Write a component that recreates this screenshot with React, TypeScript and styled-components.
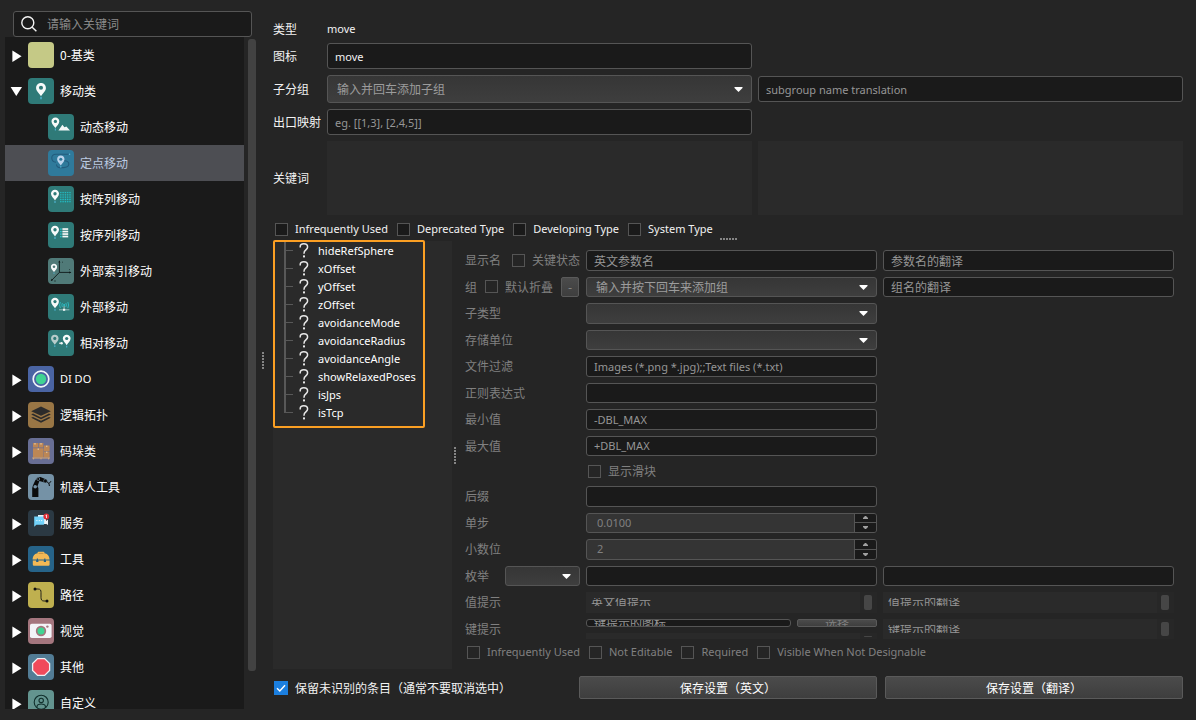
import React from "react";
import styled, { createGlobalStyle, css } from "styled-components";

const color = {
  page: "#252525",
  panel: "#2a2a2a",
  field: "#1a1a1a",
  border: "#555555",
  text: "#f2f2f2",
  muted: "#808080",
  hint: "#969696",
  thumb: "#424242",
};

const GlobalStyle = createGlobalStyle`
  *, *::before, *::after { box-sizing: border-box; }
  body {
    margin: 0;
    background: ${color.page};
    color: ${color.text};
    font-family: "Noto Sans CJK SC", "Noto Sans", sans-serif;
    font-size: 12px;
    line-height: 16px;
  }
  input, select, button, textarea { font: inherit; color: inherit; margin: 0; }
  ul { list-style: none; margin: 0; padding: 0; }
`;

/* Latin text is set a little smaller than the Chinese text beside it. */
const latinFont = css`
  font-family: "Noto Sans", "Noto Sans CJK SC", sans-serif;
  font-size: 11px;
`;

const Latin = styled.span`
  ${latinFont}
`;

const Shell = styled.div`
  display: flex;
  height: 100vh;
  overflow: hidden;
`;

/* ---------- Sidebar ---------- */

const Sidebar = styled.aside`
  display: flex;
  flex-direction: column;
  flex: none;
  width: 256px;
  padding: 11px 0 11px 5px;
`;

const SearchBox = styled.label`
  display: flex;
  align-items: center;
  gap: 10px;
  height: 26px;
  flex: none;
  margin: 0 4px 0 8px;
  padding: 0 7px;
  border: 1px solid ${color.border};
  border-radius: 3px;
  background: ${color.field};
`;

const SearchInput = styled.input`
  flex: 1;
  min-width: 0;
  padding: 0;
  border: 0;
  outline: 0;
  background: transparent;
  &::placeholder { color: #8a8a8a; }
`;

const TreeArea = styled.div`
  display: flex;
  flex: 1;
  min-height: 0;
`;

const CategoryList = styled.ul`
  flex: 1;
  overflow: hidden;
  background: ${color.field};
`;

const CategoryRow = styled.button<{ $child?: boolean; $selected?: boolean }>`
  display: flex;
  align-items: center;
  gap: 6px;
  width: 100%;
  height: 36px;
  padding: 0 0 0 ${(p) => (p.$child ? 43 : 5)}px;
  border: 0;
  text-align: left;
  background: ${(p) => (p.$selected ? "#4d4e53" : "transparent")};
  color: ${(p) => (p.$selected ? "#bccbe2" : "#ffffff")};
`;

const Tile = styled.svg`
  flex: none;
  width: 26px;
  height: 26px;
  border-radius: 4px;
`;

const Expander = styled.svg`
  flex: none;
  width: 12px;
  height: 14px;
`;

const ScrollTrack = styled.div`
  width: 12px;
  padding: 2px 0 38px 4px;
`;

const ScrollThumb = styled.div`
  height: 100%;
  border-radius: 3px;
  background: ${color.thumb};
`;

const Handle = styled.div<{ $size: number; $horizontal?: boolean }>`
  display: flex;
  flex: none;
  flex-direction: ${(p) => (p.$horizontal ? "row" : "column")};
  align-items: center;
  justify-content: center;
  gap: 1px;
  ${(p) =>
    p.$horizontal
      ? css`height: ${p.$size}px;`
      : css`width: ${p.$size}px;`}
`;

const Dot = styled.i`
  width: 2px;
  height: 2px;
  background: #858585;
`;

/* ---------- Main column ---------- */

const Main = styled.main`
  display: flex;
  flex: 1;
  flex-direction: column;
  min-width: 0;
  padding: 21px 13px 20px 3px;
`;

const TypeForm = styled.div`
  display: grid;
  grid-template-columns: 48px minmax(0, 1fr) minmax(0, 1fr);
  gap: 6px;
  align-items: center;
`;

const FormLabel = styled.label`
  grid-column: 1;
  white-space: nowrap;
`;

const fieldBox = css`
  width: 100%;
  min-width: 0;
  border: 1px solid ${color.border};
  border-radius: 3px;
  outline: 0;
`;

const TextField = styled.input<{ $tall?: boolean; $latin?: boolean }>`
  ${fieldBox}
  height: ${(p) => (p.$tall ? "26px" : "100%")};
  padding: 0 7px;
  background: ${color.field};
  ${(p) => p.$latin && latinFont}
  &::placeholder { color: ${color.hint}; opacity: 1; }
`;

const KeywordArea = styled.textarea`
  display: block;
  width: 100%;
  height: 74px;
  padding: 5px;
  border: 0;
  outline: 0;
  resize: none;
  background: ${color.panel};
`;

const ComboWrap = styled.span<{ $tall?: boolean }>`
  position: relative;
  display: block;
  min-width: 0;
  height: ${(p) => (p.$tall ? "28px" : "100%")};
`;

const ComboSelect = styled.select`
  ${fieldBox}
  display: block;
  height: 100%;
  padding: 0 28px 0 9px;
  appearance: none;
  background: linear-gradient(#363636, #3e3e3e);
  color: #9c9c9c;
  opacity: 1;
`;

const ComboArrow = styled.svg`
  position: absolute;
  top: calc(50% - 2px);
  right: 9px;
  width: 9px;
  height: 5px;
  pointer-events: none;
`;

const CheckRow = styled.div`
  display: flex;
  align-items: center;
  gap: 9px;
  height: 16px;
  flex: none;
  padding-left: 2px;
`;

const WideCheckRow = styled(CheckRow)`
  grid-column: 1 / -1;
`;

const CheckLabel = styled.label<{ $latin?: boolean }>`
  display: flex;
  align-items: center;
  gap: 7px;
  white-space: nowrap;
  ${(p) => p.$latin && latinFont}
`;

const CheckBox = styled.input<{ $dim?: boolean }>`
  appearance: none;
  flex: none;
  width: 13px;
  height: 13px;
  border: 1px solid ${color.border};
  background: ${(p) => (p.$dim ? color.page : color.field)};
`;

const KeepBox = styled.input`
  appearance: none;
  display: block;
  width: 14px;
  height: 14px;
  background: #1b7fe0;
`;

const KeepMark = styled.span`
  position: relative;
  flex: none;
  svg {
    position: absolute;
    inset: 0;
    pointer-events: none;
  }
`;

const Workspace = styled.div`
  display: flex;
  flex: 1;
  min-height: 0;
`;

const ParamPanel = styled.div`
  display: flex;
  flex: none;
  flex-direction: column;
  align-items: flex-start;
  width: 179px;
  background: ${color.panel};
`;

const ParamTree = styled.ul`
  margin-top: -1px;
  padding: 0 7px 4px 9px;
  border: 2px solid #fb9f23;
  border-radius: 2px;
`;

const ParamRow = styled.li`
  display: flex;
  align-items: center;
  height: 18px;
  white-space: nowrap;
  color: #ffffff;
  ${latinFont}
`;

const Branch = styled.svg`
  flex: none;
  width: 10px;
  height: 18px;
  margin-right: 5px;
`;

const Question = styled.svg`
  flex: none;
  width: 10px;
  height: 16px;
  margin-right: 9px;
`;

const ParamForm = styled.fieldset`
  display: flex;
  flex: 1;
  flex-direction: column;
  gap: 5px;
  min-width: 0;
  margin: 0;
  padding: 9px 9px 9px 7px;
  border: 0;
  color: ${color.muted};
`;

const PropGrid = styled.div`
  display: grid;
  flex: 1;
  grid-template-columns: 115px minmax(0, 1fr) minmax(0, 1fr);
  grid-template-rows: repeat(8, minmax(0, 1fr)) 18px repeat(6, minmax(0, 1fr));
  gap: 6px;
  min-height: 0;
`;

const PropLabel = styled.div<{ $spread?: boolean }>`
  display: flex;
  grid-column: 1;
  align-items: center;
  justify-content: ${(p) => (p.$spread ? "space-between" : "flex-start")};
  gap: 8px;
  min-height: 0;
  white-space: nowrap;
`;

const SliderCell = styled.div`
  display: flex;
  grid-column: 2;
  align-items: center;
  padding-left: 2px;
`;

const faceStyle = css`
  border: 1px solid #5a5a5a;
  border-radius: 2px;
  background: linear-gradient(#4b4b4b, #3e3e3e);
`;

const MinusButton = styled.button`
  ${faceStyle}
  width: 18px;
  height: 100%;
  padding: 0;
  color: #8a8a8a;
`;

const EnumCombo = styled.div`
  width: 75px;
  height: 100%;
`;

const Spin = styled.div`
  ${fieldBox}
  display: flex;
  min-height: 0;
  overflow: hidden;
  background: #343434;
`;

const SpinInput = styled.input`
  flex: 1;
  min-width: 0;
  padding: 0 10px;
  border: 0;
  outline: 0;
  background: transparent;
  ${latinFont}
`;

const SpinButtons = styled.div`
  display: flex;
  flex-direction: column;
  width: 22px;
  border-left: 1px solid ${color.border};
`;

const SpinButton = styled.button`
  display: flex;
  flex: 1;
  align-items: center;
  justify-content: center;
  min-height: 0;
  padding: 0;
  border: 0;
  background: ${color.field};
  & + & { border-top: 1px solid ${color.border}; }
`;

const Memo = styled.div`
  display: flex;
  align-items: center;
  justify-content: space-between;
  min-height: 0;
  height: 100%;
  padding: 0 0 0 5px;
  overflow: hidden;
  background: ${color.panel};
`;

const MemoText = styled.textarea`
  flex: 1;
  min-width: 0;
  height: 8px;
  padding: 0;
  border: 0;
  outline: 0;
  resize: none;
  overflow: hidden;
  line-height: 8px;
  background: transparent;
  &::placeholder { color: ${color.hint}; }
`;

const MemoTrack = styled.div`
  display: flex;
  align-self: stretch;
  justify-content: center;
  width: 17px;
  padding: 3px 1px 3px 0;
  background: #272727;
`;

const MemoThumb = styled.div`
  width: 8px;
  border-radius: 2px;
  background: #464646;
`;

const KeyHint = styled.div`
  display: flex;
  flex-direction: column;
  gap: 6px;
  min-height: 0;
`;

const KeyHintRow = styled.div`
  display: flex;
  gap: 6px;
  height: 8px;
  flex: none;
`;

const TinyField = styled(TextField)`
  flex: 1;
  width: auto;
  line-height: 6px;
`;

const TinyButton = styled.button`
  ${faceStyle}
  width: 80px;
  padding: 0;
  overflow: hidden;
  line-height: 6px;
`;

const BottomBar = styled.div`
  display: grid;
  grid-template-columns: repeat(3, minmax(0, 1fr));
  gap: 8px;
  align-items: center;
  height: 25px;
  margin-top: 6px;
  flex: none;
`;

const KeepLabel = styled(CheckLabel)`
  padding-left: 1px;
`;

const SaveButton = styled.button`
  ${faceStyle}
  height: 23px;
  padding: 0;
  color: #ffffff;
`;

/* ---------- Drawings ---------- */

type PinProps = { x: number; y: number; s?: number; fill?: string; hole?: string };

const Pin = ({ x, y, s = 1, fill = "#f7fafa", hole = "#2f7a78" }: PinProps) => (
  <g transform={`translate(${x} ${y}) scale(${s})`}>
    <path d="M0 0C-2.5 0-4.1 1.8-4.1 4.1C-4.1 6.8-1.3 8.6 0 11C1.3 8.6 4.1 6.8 4.1 4.1C4.1 1.8 2.5 0 0 0Z" fill={fill} />
    <circle cx="0" cy="4" r="1.7" fill={hole} />
    <path d="M0 11.5V13.5" stroke="#4fb3d0" strokeWidth="1.2" />
  </g>
);

const range = (n: number) => Array.from({ length: n }, (_, i) => i);

const tiles: Record<string, { bg: string; art: React.ReactNode }> = {
  base: { bg: "#c5c986", art: null },
  move: { bg: "#2f7a78", art: <Pin x={13} y={5} s={1.2} /> },
  dynamic: {
    bg: "#2f7a78",
    art: (
      <>
        <Pin x={7.4} y={3.6} s={0.95} />
        <path d="M10.4 16.4L14.4 10.8L16.4 13.2L18.4 12.4L22 16.4Z" fill="#f4f7f7" />
      </>
    ),
  },
  fixed: {
    bg: "#2f7a9b",
    art: (
      <>
        <path d="M21.5 4.3H8C5 4.3 3.6 6 3.8 8.2C4 10.8 5.5 12 8 12.2M16 10.8C19 10.6 21 12 20.8 14.3C20.6 16.6 18.6 17.6 15.5 17.6H12C9.6 17.6 8.4 16 8.6 14.4" fill="none" stroke="#235c7d" strokeWidth="1.1" />
        <circle cx="21.5" cy="4.3" r="0.8" fill="#5cb9dc" />
        <Pin x={12.8} y={5.6} s={0.9} fill="#bdd4ec" hole="#2f7a9b" />
      </>
    ),
  },
  array: {
    bg: "#2f7a78",
    art: (
      <>
        <Pin x={7} y={3.8} s={0.98} />
        <path d={range(5).map((i) => `M12 ${6.5 + i * 2.3}H23M${12.8 + i * 2.3} 5.8V16.5`).join("")} stroke="#22a9b2" strokeWidth="0.3" />
        {range(25).map((i) => (
          <circle key={i} cx={12.8 + (i % 5) * 2.3} cy={6.5 + Math.floor(i / 5) * 2.3} r="0.6" fill="#25c3cc" />
        ))}
      </>
    ),
  },
  sequence: {
    bg: "#2f7a78",
    art: (
      <>
        <Pin x={7} y={3.8} s={0.98} />
        {range(4).map((i) => (
          <g key={i}>
            <rect x="12.2" y={6.4 + i * 2.5} width="1.4" height="1.4" fill="#2cd0d8" />
            <rect x="14.4" y={6.2 + i * 2.5} width="5.8" height="1.7" fill="#f4f7f7" />
          </g>
        ))}
      </>
    ),
  },
  axes: {
    bg: "#507a78",
    art: (
      <>
        <path d="M11.4 3V14.4H22.8M11.4 14.4L3.4 22.6" fill="none" stroke="#0f1818" strokeWidth="0.9" />
        <path d="M11.4 2.2L12.4 4.4H10.4ZM23.4 14.4L21.2 13.4V15.4ZM2.8 23L3.6 20.8L5 22.2Z" fill="#0f1818" />
        <path d="M14 4.2H15M21 11.6H22M6 23H8" stroke="#253c3b" strokeWidth="0.9" />
        <Pin x={6} y={5.8} s={0.75} hole="#507a78" />
      </>
    ),
  },
  external: {
    bg: "#2f7a78",
    art: (
      <>
        <Pin x={7} y={3.8} s={0.95} />
        <g fill="none" stroke="#2cc4cc" strokeWidth="0.8">
          <path d="M12.4 8Q10.8 11 12.4 14M14.4 9Q13.2 11 14.4 13M19.8 8Q21.4 11 19.8 14M17.8 9Q19 11 17.8 13" />
        </g>
        <circle cx="16.1" cy="11" r="1" fill="#2cc4cc" />
        <path d="M11 15.8H21.4M16.1 12V16" stroke="#a9c6c5" strokeWidth="0.9" />
        <rect x="15" y="14.8" width="2.2" height="2" fill="#eef5f5" />
      </>
    ),
  },
  relative: {
    bg: "#2f7a78",
    art: (
      <>
        <Pin x={6.8} y={4.7} s={0.92} fill="#b7cccb" />
        <path d="M11 13.2H14" stroke="#f4f7f7" strokeWidth="1" />
        <circle cx="13.6" cy="13.2" r="1.2" fill="#f4f7f7" />
        <Pin x={18.7} y={4.7} s={0.95} />
      </>
    ),
  },
  dido: {
    bg: "#4a64a3",
    art: (
      <>
        <circle cx="13" cy="13" r="7.8" fill="none" stroke="#f3f5fa" strokeWidth="1.7" />
        <circle cx="13" cy="13" r="5.2" fill="#40d493" />
      </>
    ),
  },
  logic: {
    bg: "#997645",
    art: (
      <g fill="#2b2b2b">
        <path d="M13 4.6L22.8 9.2L13 13.8L3.2 9.2Z" />
        <path d="M3.2 12.4L5 11.6L13 15.4L21 11.6L22.8 12.4L13 17.2Z" />
        <path d="M3.2 15.8L5 15L13 18.8L21 15L22.8 15.8L13 20.8Z" />
      </g>
    ),
  },
  pallet: {
    bg: "#686e94",
    art: (
      <>
        <path d="M5 5H10V9.6H5ZM10.6 5H15.4V9.6H10.6ZM5 10.2H15.6V19.4H5ZM16 7.6H21.6V12.9H16ZM16 13.5H21.6V19.4H16Z" fill="#bd8755" />
        <path d="M7 5V6.6M13 5V6.6M18.8 7.6V9M18.8 13.6V15M10.2 10.4V12" stroke="#ecd3b0" strokeWidth="1" />
        <path d="M4.2 20H22M5.6 19.8V21.4M13 19.8V21.4M20.6 19.8V21.4" stroke="#d7a877" strokeWidth="1" />
      </>
    ),
  },
  robot: {
    bg: "#7592a6",
    art: (
      <>
        <path d="M4.2 23V14L5 11.2L7.2 6.4L9.4 3.4L12.4 3L17.8 5.2L16.8 8.4L11.4 7L9.4 12.4L10.4 14V23Z" fill="#0b0b0b" />
        <circle cx="10.2" cy="5" r="1.5" fill="#0b0b0b" stroke="#7592a6" strokeWidth="0.7" />
        <circle cx="7.2" cy="12.8" r="1.8" fill="#7592a6" />
        <circle cx="17.4" cy="7" r="1.9" fill="#0b0b0b" stroke="#7592a6" strokeWidth="0.5" />
        <path d="M18.6 7.4L21 9.6L23 7.2M21 9.6L21.4 12" fill="none" stroke="#0b0b0b" strokeWidth="1" />
      </>
    ),
  },
  service: {
    bg: "#2b3943",
    art: (
      <>
        <path d="M10 5H18V14H10ZM18 11L20 9.6V15L18 13.8Z" fill="#eef3f6" />
        <path d="M6.2 6.6H15.4Q16.2 6.6 16.2 7.4V14Q16.2 14.8 15.4 14.8H8.4L6.2 16.8Z" fill="#72d3fb" />
        <path d="M8.4 10.6H9.4M10.8 10.6H11.8M13.2 10.6H14.2" stroke="#ffffff" strokeWidth="1" />
        <circle cx="18.3" cy="6.5" r="2.9" fill="#dc3038" />
        <path d="M17.6 5.6L18.5 5V8" fill="none" stroke="#ffffff" strokeWidth="0.8" />
      </>
    ),
  },
  tools: {
    bg: "#266388",
    art: (
      <>
        <path d="M4.6 13.4C5 9.4 7 7.6 9.6 7.2V6.6Q9.6 5.8 10.6 5.8H15.4Q16.4 5.8 16.4 6.6V7.2C19 7.6 21.2 9.4 21.6 13.4Z" fill="#f2b955" />
        <path d="M10.6 7.4H15.4" stroke="#b88c46" strokeWidth="0.9" />
        <path d="M4.8 14.6H8.2V16H10.4V14.6H15.8V16H18V14.6H21.6V18.6Q21.6 19.8 20.4 19.8H6Q4.8 19.8 4.8 18.6Z" fill="#f2b955" />
        <path d="M8.8 12.4H10V15.6H8.8ZM16.2 12.4H17.4V15.6H16.2Z" fill="#266388" />
      </>
    ),
  },
  path: {
    bg: "#bfb04f",
    art: (
      <>
        <path d="M7 7H10C12.6 7 13 8.4 13 10.4V15.4C13 17.8 13.8 19 16 19H19" fill="none" stroke="#151515" strokeWidth="0.9" />
        <circle cx="7" cy="7" r="1.5" fill="#111111" />
        <circle cx="19" cy="19" r="1.5" fill="#111111" />
      </>
    ),
  },
  vision: {
    bg: "#a4767e",
    art: (
      <>
        <rect x="2" y="5.8" width="21.6" height="14.2" rx="1.8" fill="#f3f4f8" />
        <circle cx="13" cy="13" r="5.2" fill="#a4767e" />
        <circle cx="13" cy="13" r="3.5" fill="#40d493" />
        <circle cx="19.4" cy="8.6" r="1.2" fill="#a4767e" />
      </>
    ),
  },
  other: {
    bg: "#527c95",
    art: <path d="M9.6 4.6H16.6L21.6 9.6V16.4L16.6 21.4H9.6L4.6 16.4V9.6Z" fill="#f04a5b" stroke="#eef1f5" strokeWidth="1.3" />,
  },
  custom: {
    bg: "#63948f",
    art: (
      <g fill="none" stroke="#11302d" strokeWidth="1.1">
        <circle cx="13.2" cy="12.2" r="7" />
        <circle cx="13.2" cy="10.4" r="2.2" />
        <path d="M9 17.4V16.4Q9.4 14 13.2 14Q17 14 17.4 16.4V17.4" />
      </g>
    ),
  },
};

const TileIcon = ({ name }: { name: string }) => (
  <Tile viewBox="0 0 26 26" aria-hidden="true">
    <rect width="26" height="26" fill={tiles[name].bg} />
    {tiles[name].art}
  </Tile>
);

const SearchIcon = () => (
  <svg width="16" height="16" viewBox="0 0 16 16" fill="none" stroke="#f4f4f4" strokeWidth="1.4" aria-hidden="true">
    <circle cx="6.8" cy="6.8" r="6" />
    <path d="M11.2 11.2L15.4 15.2" />
  </svg>
);

/* ---------- Composite parts ---------- */

const Dots = ({ size, horizontal }: { size: number; horizontal?: boolean }) => (
  <Handle $size={size} $horizontal={horizontal}>
    {range(6).map((i) => <Dot key={i} />)}
  </Handle>
);

type ComboProps = { id?: string; label: string; text?: string; tall?: boolean };

const Combo = ({ id, label, text = "", tall }: ComboProps) => (
  <ComboWrap $tall={tall}>
    <ComboSelect id={id} aria-label={label}>
      <option>{text}</option>
    </ComboSelect>
    <ComboArrow viewBox="0 0 9 5" aria-hidden="true">
      <path d="M0.5 0H8.5V1L4.5 5L0.5 1Z" fill="#ffffff" />
    </ComboArrow>
  </ComboWrap>
);

const Check = ({ text, dim, latin }: { text: string; dim?: boolean; latin?: boolean }) => (
  <CheckLabel $latin={latin}>
    <CheckBox type="checkbox" $dim={dim} />
    {text}
  </CheckLabel>
);

const SpinBox = ({ id, value }: { id: string; value: string }) => (
  <Spin>
    <SpinInput id={id} defaultValue={value} inputMode="decimal" />
    <SpinButtons>
      <SpinButton type="button" aria-label="增加">
        <svg width="5" height="3" viewBox="0 0 5 3"><path d="M0 3V2L2 0H3L5 2V3Z" fill="#a0a0a0" /></svg>
      </SpinButton>
      <SpinButton type="button" aria-label="减少">
        <svg width="5" height="3" viewBox="0 0 5 3"><path d="M0 0V1L2 3H3L5 1V0Z" fill="#a0a0a0" /></svg>
      </SpinButton>
    </SpinButtons>
  </Spin>
);

const MemoBox = ({ id, label, text }: { id?: string; label: string; text?: string }) => (
  <Memo>
    <MemoText id={id} aria-label={label} placeholder={text} rows={1} />
    <MemoTrack><MemoThumb /></MemoTrack>
  </Memo>
);

/* ---------- Data ---------- */

type Category = {
  icon: string;
  name: string;
  latin?: boolean;
  open?: boolean;
  children?: { icon: string; name: string; selected?: boolean }[];
};

const categories: Category[] = [
  { icon: "base", name: "0-基类" },
  {
    icon: "move",
    name: "移动类",
    open: true,
    children: [
      { icon: "dynamic", name: "动态移动" },
      { icon: "fixed", name: "定点移动", selected: true },
      { icon: "array", name: "按阵列移动" },
      { icon: "sequence", name: "按序列移动" },
      { icon: "axes", name: "外部索引移动" },
      { icon: "external", name: "外部移动" },
      { icon: "relative", name: "相对移动" },
    ],
  },
  { icon: "dido", name: "DI DO", latin: true },
  { icon: "logic", name: "逻辑拓扑" },
  { icon: "pallet", name: "码垛类" },
  { icon: "robot", name: "机器人工具" },
  { icon: "service", name: "服务" },
  { icon: "tools", name: "工具" },
  { icon: "path", name: "路径" },
  { icon: "vision", name: "视觉" },
  { icon: "other", name: "其他" },
  { icon: "custom", name: "自定义" },
];

const params = [
  "hideRefSphere", "xOffset", "yOffset", "zOffset", "avoidanceMode",
  "avoidanceRadius", "avoidanceAngle", "showRelaxedPoses", "isJps", "isTcp",
];

export default function App() {
  return (
    <Shell>
      <GlobalStyle />
      <Sidebar>
        <SearchBox>
          <SearchIcon />
          <SearchInput placeholder="请输入关键词" aria-label="请输入关键词" />
        </SearchBox>
        <TreeArea>
          <CategoryList>
            {categories.map((c) => (
              <li key={c.name}>
                <CategoryRow type="button" aria-expanded={!!c.open}>
                  <Expander viewBox="0 0 12 14" aria-hidden="true">
                    <path d={c.open ? "M0.6 3H12L6.3 12Z" : "M2.4 2.4V14L11.6 8.2Z"} fill="#ffffff" />
                  </Expander>
                  <TileIcon name={c.icon} />
                  {c.latin ? <Latin>{c.name}</Latin> : c.name}
                </CategoryRow>
                {c.children && (
                  <ul>
                    {c.children.map((k) => (
                      <li key={k.name}>
                        <CategoryRow type="button" $child $selected={k.selected}>
                          <TileIcon name={k.icon} />
                          {k.name}
                        </CategoryRow>
                      </li>
                    ))}
                  </ul>
                )}
              </li>
            ))}
          </CategoryList>
          <ScrollTrack><ScrollThumb /></ScrollTrack>
        </TreeArea>
      </Sidebar>

      <Dots size={14} />

      <Main>
        <TypeForm>
          <FormLabel as="span">类型</FormLabel>
          <Latin>move</Latin>
          <FormLabel htmlFor="icon">图标</FormLabel>
          <TextField id="icon" $tall $latin defaultValue="move" />
          <FormLabel htmlFor="subgroup">子分组</FormLabel>
          <Combo id="subgroup" label="子分组" text="输入并回车添加子组" tall />
          <TextField $tall $latin placeholder="subgroup name translation" aria-label="subgroup name translation" />
          <FormLabel htmlFor="exits">出口映射</FormLabel>
          <TextField id="exits" $tall $latin placeholder="eg. [[1,3], [2,4,5]]" />
          <FormLabel htmlFor="keywords">关键词</FormLabel>
          <KeywordArea id="keywords" />
          <KeywordArea aria-label="关键词翻译" />
          <WideCheckRow>
            <Check latin text="Infrequently Used" />
            <Check latin text="Deprecated Type" />
            <Check latin text="Developing Type" />
            <Check latin text="System Type" />
          </WideCheckRow>
        </TypeForm>

        <Dots size={4} horizontal />

        <Workspace>
          <ParamPanel>
            <ParamTree>
              {params.map((name, i) => (
                <ParamRow key={name}>
                  <Branch viewBox="0 0 10 18" aria-hidden="true">
                    <path d={i === params.length - 1 ? "M0 0H2V9H0Z" : "M0 0H2V18H0Z"} fill="#585858" />
                    <path d="M0 8H9V9H0Z" fill="#585858" />
                  </Branch>
                  <Question viewBox="0 0 10 16" aria-hidden="true">
                    <path d="M1.2 4.4V3.8C1.2 1.8 2.8 0.8 4.8 0.8C7 0.8 8.6 2 8.6 4C8.6 7 5 6.8 5 10.2V10.8" fill="none" stroke="#e8e8e8" strokeWidth="1.5" />
                    <rect x="4" y="12.4" width="2" height="2" fill="#e8e8e8" />
                  </Question>
                  {name}
                </ParamRow>
              ))}
            </ParamTree>
          </ParamPanel>

          <Dots size={6} />

          <ParamForm>
            <PropGrid>
              <PropLabel $spread>
                <label htmlFor="displayName">显示名</label>
                <Check text="关键状态" dim />
              </PropLabel>
              <TextField id="displayName" placeholder="英文参数名" />
              <TextField placeholder="参数名的翻译" aria-label="参数名的翻译" />

              <PropLabel>
                <label htmlFor="group">组</label>
                <Check text="默认折叠" dim />
                <MinusButton type="button">-</MinusButton>
              </PropLabel>
              <Combo id="group" label="组" text="输入并按下回车来添加组" />
              <TextField placeholder="组名的翻译" aria-label="组名的翻译" />

              <PropLabel as="label" htmlFor="subtype">子类型</PropLabel>
              <Combo id="subtype" label="子类型" />

              <PropLabel as="label" htmlFor="unit">存储单位</PropLabel>
              <Combo id="unit" label="存储单位" />

              <PropLabel as="label" htmlFor="filter">文件过滤</PropLabel>
              <TextField id="filter" $latin placeholder="Images (*.png *.jpg);;Text files (*.txt)" />

              <PropLabel as="label" htmlFor="regex">正则表达式</PropLabel>
              <TextField id="regex" />

              <PropLabel as="label" htmlFor="min">最小值</PropLabel>
              <TextField id="min" $latin placeholder="-DBL_MAX" />

              <PropLabel as="label" htmlFor="max">最大值</PropLabel>
              <TextField id="max" $latin placeholder="+DBL_MAX" />

              <SliderCell>
                <Check text="显示滑块" dim />
              </SliderCell>

              <PropLabel as="label" htmlFor="suffix">后缀</PropLabel>
              <TextField id="suffix" />

              <PropLabel as="label" htmlFor="step">单步</PropLabel>
              <SpinBox id="step" value="0.0100" />

              <PropLabel as="label" htmlFor="decimals">小数位</PropLabel>
              <SpinBox id="decimals" value="2" />

              <PropLabel $spread>
                <label htmlFor="enum">枚举</label>
                <EnumCombo><Combo id="enum" label="枚举" /></EnumCombo>
              </PropLabel>
              <TextField aria-label="枚举值" />
              <TextField aria-label="枚举值翻译" />

              <PropLabel as="label" htmlFor="valueTip">值提示</PropLabel>
              <MemoBox id="valueTip" label="值提示" text="英文值提示" />
              <MemoBox label="值提示的翻译" text="值提示的翻译" />

              <PropLabel as="label" htmlFor="keyTip">键提示</PropLabel>
              <KeyHint>
                <KeyHintRow>
                  <TinyField id="keyTip" placeholder="键提示的图标" />
                  <TinyButton type="button">选择</TinyButton>
                </KeyHintRow>
                <MemoBox label="键提示" />
              </KeyHint>
              <MemoBox label="键提示的翻译" text="键提示的翻译" />
            </PropGrid>
            <CheckRow>
              <Check latin text="Infrequently Used" dim />
              <Check latin text="Not Editable" dim />
              <Check latin text="Required" dim />
              <Check latin text="Visible When Not Designable" dim />
            </CheckRow>
          </ParamForm>
        </Workspace>

        <BottomBar>
          <KeepLabel>
            <KeepMark>
              <KeepBox type="checkbox" defaultChecked />
              <svg width="14" height="14" viewBox="0 0 14 14" aria-hidden="true">
                <path d="M3 7.2L5.8 10L11 4.2" fill="none" stroke="#ffffff" strokeWidth="1.4" />
              </svg>
            </KeepMark>
            保留未识别的条目（通常不要取消选中）
          </KeepLabel>
          <SaveButton type="button">保存设置（英文）</SaveButton>
          <SaveButton type="button">保存设置（翻译）</SaveButton>
        </BottomBar>
      </Main>
    </Shell>
  );
}
